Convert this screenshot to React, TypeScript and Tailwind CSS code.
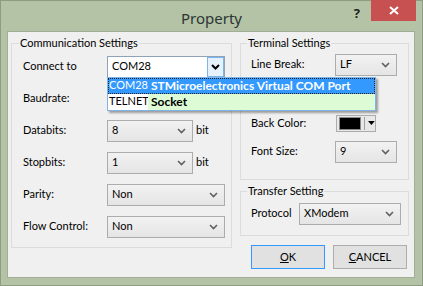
import React from 'react';

const FONT = { fontFamily: 'Lato, "Noto Sans", sans-serif' };

const Chevron = ({ dark }: { dark?: boolean }) => (
  <svg width="9" height="6" viewBox="0 0 9 6" className="shrink-0">
    <path
      d="M1 1 L4.5 4.5 L8 1"
      fill="none"
      stroke={dark ? '#000' : '#606060'}
      strokeWidth={dark ? 2 : 1.6}
    />
  </svg>
);

const Combo = ({ value, w }: { value?: string; w: string }) => (
  <div
    className={`flex h-[22px] ${w} items-center justify-between border border-[#acacac] bg-gradient-to-b from-[#f2f2f2] to-[#e5e5e5] pl-[4px] pr-[6px] text-[#000]`}
  >
    <span>{value}</span>
    <Chevron />
  </div>
);

const Row = ({ label, children, lw = 'w-[84px]' }: { label: string; children: React.ReactNode; lw?: string }) => (
  <div className="flex items-center">
    <span className={`${lw} shrink-0`}>{label}</span>
    {children}
  </div>
);

export default function App() {
  return (
    <div
      className="flex h-[286px] w-[423px] flex-col border border-[#8e9c82] bg-[#b4c3a5] text-[11px] text-[#000]"
      style={FONT}
    >
      {/* title bar */}
      <div
        className="relative flex h-[30px] shrink-0 items-start justify-center"
        style={{ fontFamily: '"Noto Sans", sans-serif' }}
      >
        <span className="mt-[6px] text-[15px] text-[#2b3535]">Property</span>
        <div className="absolute right-[6px] top-[-1px] flex items-start">
          <span className="mr-[11px] mt-[4px] text-[13px] font-bold text-[#222]">?</span>
          <div className="flex h-[21px] w-[45px] items-center justify-center bg-[#c75050]">
            <svg width="10" height="9" viewBox="0 0 10 9">
              <path d="M1 1 L9 8 M9 1 L1 8" stroke="#fff" strokeWidth="2" />
            </svg>
          </div>
        </div>
      </div>

      {/* client area */}
      <div className="ml-[6px] flex h-[247px] w-[408px] border border-[#a2ad98] bg-[#f0f0f0] pl-[3px] pt-[3px]">
        {/* left group */}
        <fieldset className="h-[213px] w-[221px] border border-[#dcdcdc]">
          <legend className="ml-[7px] px-[1px]">Communication Settings</legend>
          <div className="flex flex-col gap-[10px] pl-[11px] pt-[4px]">
            <Row label="Connect to">
              <div className="relative">
                <div className="flex h-[22px] w-[118px] items-center border border-[#8fa3b8] bg-white pl-[4px]">
                  <span className="flex-1">COM28</span>
                  <div className="flex h-[20px] w-[17px] items-center justify-center border border-[#7eb4ea] bg-[#e5f1fb]">
                    <Chevron dark />
                  </div>
                </div>
                <div className="absolute left-0 top-[21px] z-10 w-[269px] whitespace-nowrap border border-[#7eb4ea] bg-white shadow-[2px_2px_2px_rgba(0,0,0,0.35)]">
                  <div className="flex h-[16px] items-center border border-dotted border-[#222] bg-[#3399ff] text-white">
                    <span className="w-[39px] shrink-0">COM28</span>
                    <span className="pl-[3px] text-[12px] font-bold">STMicroelectronics Virtual COM Port</span>
                  </div>
                  <div className="flex h-[16px] items-center">
                    <span className="w-[40px] shrink-0 pl-[1px]">TELNET</span>
                    <span className="flex h-full flex-1 items-center bg-[#ddfcd6] pl-[3px] text-[12px] font-bold">Socket</span>
                  </div>
                </div>
              </div>
            </Row>
            <Row label="Baudrate:">
              <Combo w="w-[118px]" />
            </Row>
            <Row label="Databits:">
              <Combo value="8" w="w-[86px]" />
              <span className="ml-[3px]">bit</span>
            </Row>
            <Row label="Stopbits:">
              <Combo value="1" w="w-[86px]" />
              <span className="ml-[3px]">bit</span>
            </Row>
            <Row label="Parity:">
              <Combo value="Non" w="w-[118px]" />
            </Row>
            <Row label="Flow Control:">
              <Combo value="Non" w="w-[118px]" />
            </Row>
          </div>
        </fieldset>

        {/* right column */}
        <div className="ml-[8px] flex w-[169px] flex-col">
          <fieldset className="h-[145px] border border-[#dcdcdc]">
            <legend className="ml-[6px] px-[1px]">Terminal Settings</legend>
            <div className="pl-[10px] pt-[2px]">
              <Row label="Line Break:" lw="w-[84px]">
                <Combo value="LF" w="w-[62px]" />
              </Row>
              <div className="mt-[39px] flex items-center">
                <span className="w-[85px]">Back Color:</span>
                <div className="flex h-[17px] w-[40px] items-center border border-[#acacac] bg-[#e8e8e8] pl-[2px]">
                  <div className="h-[13px] w-[23px] border border-[#888] bg-black" />
                  <div className="ml-[3px] h-[13px] w-px bg-[#a0a0a0]" />
                  <svg width="7" height="4" viewBox="0 0 7 4" className="ml-[3px]">
                    <path d="M0 0 L7 0 L3.5 4 Z" fill="#000" />
                  </svg>
                </div>
              </div>
              <div className="mt-[9px]">
                <Row label="Font Size:" lw="w-[84px]">
                  <Combo value="9" w="w-[62px]" />
                </Row>
              </div>
            </div>
          </fieldset>

          <fieldset className="mt-[3px] h-[53px] border border-[#dcdcdc]">
            <legend className="ml-[6px] px-[1px]">Transfer Setting</legend>
            <div className="pl-[10px] pt-[3px]">
              <Row label="Protocol" lw="w-[48px]">
                <Combo value="XModem" w="w-[102px]" />
              </Row>
            </div>
          </fieldset>

          <div className="mt-[9px] flex gap-[8px] pl-[11px]">
            <button className="flex h-[24px] w-[74px] items-center justify-center border border-[#3399ff] bg-[#e1e1e1]">
              <span><u>O</u>K</span>
            </button>
            <button className="flex h-[24px] w-[74px] items-center justify-center border border-[#adadad] bg-[#e1e1e1]">
              <span><u>C</u>ANCEL</span>
            </button>
          </div>
        </div>
      </div>
    </div>
  );
}
